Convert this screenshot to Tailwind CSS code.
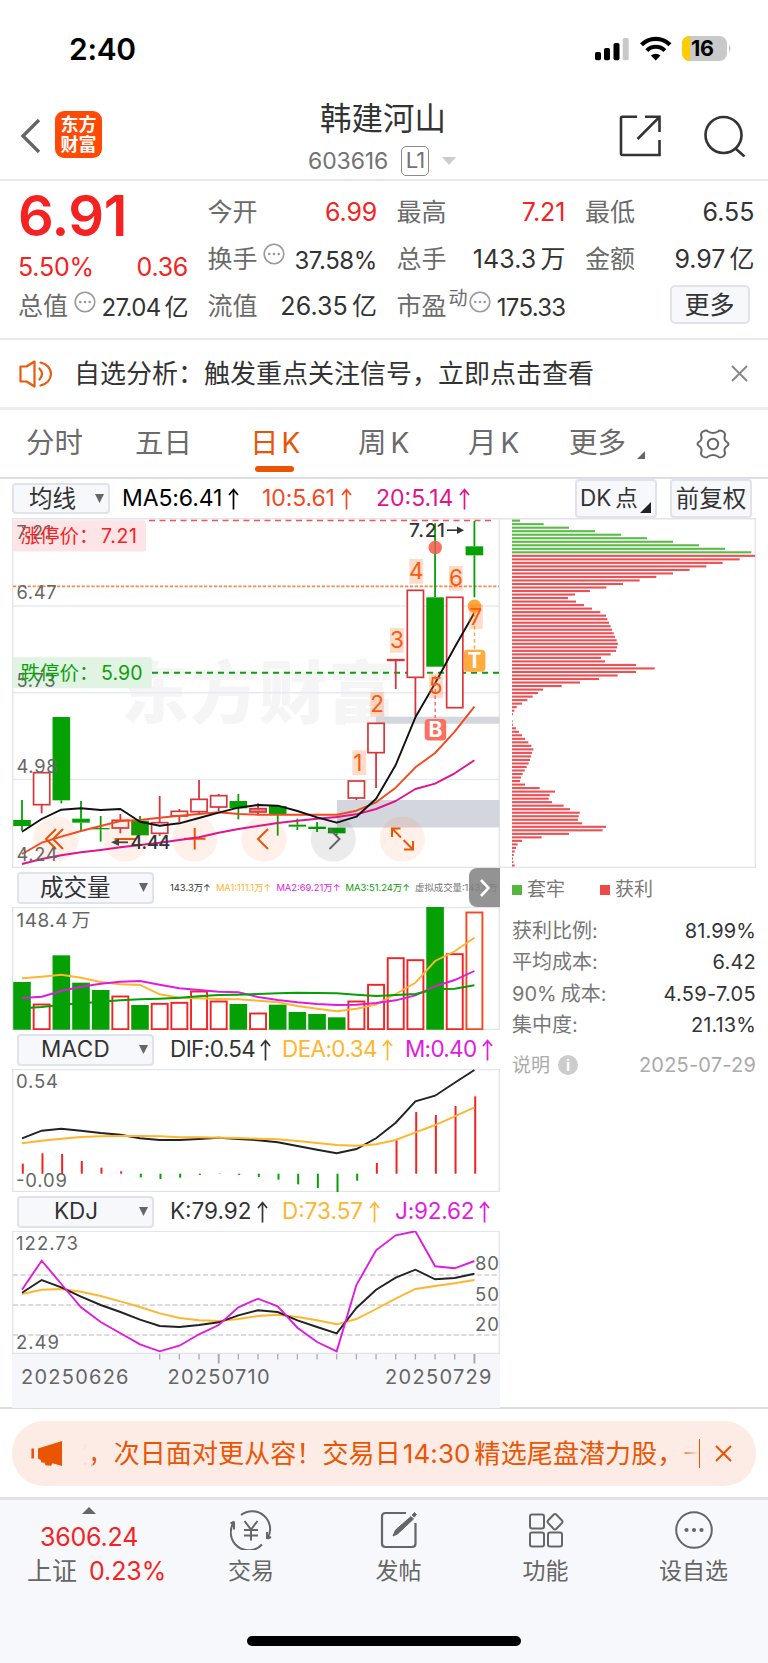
<!DOCTYPE html>
<html lang="zh-CN">
<head>
<meta charset="utf-8">
<title>韩建河山 603616</title>
<script src="https://cdn.jsdelivr.net/npm/@tailwindcss/browser@4"></script>
</head>
<body class="w-[768px] h-[1663px] flex flex-col bg-white font-['Inter','Noto_Sans_CJK_SC',sans-serif] text-[#333] overflow-hidden">

<!-- status bar -->
<div class="h-[98px] shrink-0 flex items-center justify-between pl-[69px] pr-[37px]">
  <div class="text-[30px] font-semibold text-black leading-none tracking-[-0.3px]">2:40</div>
  <svg class="w-[138px] h-[28px]" viewBox="593 35 138 28">
    <rect x="595" y="52" width="6" height="8.3" rx="1.8"/><rect x="604" y="48" width="6" height="12.3" rx="1.8"/><rect x="613.500" y="43" width="6" height="17.300" rx="1.800"/><rect x="622.700" y="38" width="6" height="22.300" rx="1.800" fill="#c9c9c9"/>
    <g fill="none" stroke="#000" stroke-width="4.200"><path d="M641.500 44.800a20 20 0 0 1 28.500 0"/><path d="M646.800 50.600a12.500 12.500 0 0 1 18 0"/></g>
    <path d="M655.700 60.500l-4.800-4.900a7 7 0 0 1 9.600 0z"/>
    <clipPath id="bat"><rect x="682" y="36" width="45" height="25" rx="7.500"/></clipPath>
    <g clip-path="url(#bat)"><rect x="682" y="36" width="45" height="25" fill="#c9c9c9"/><rect x="682" y="36" width="8" height="25" fill="#ffcc00"/></g>
    <path d="M729 44.500q3 4 0 8z" fill="#c9c9c9"/>
    <text x="691" y="56.300" font-size="21.500" font-weight="700" letter-spacing="-0.3">16</text>
  </svg>
</div>

<!-- header -->
<div class="h-[83px] shrink-0 border-b-2 border-[#e9e9e9] flex items-center justify-between pl-[20px] pr-[22px] relative">
  <div class="flex items-center gap-[14px] relative -top-[3px]">
    <svg class="w-[21px] h-[36px]" viewBox="0 0 21 36"><path d="M19 2L3 18l16 16" fill="none" stroke="#666" stroke-width="3.400"/></svg>
    <div class="w-[47px] h-[47px] rounded-[9px] bg-[#ff4a06] text-white font-bold text-[18px] leading-[20px] flex flex-col items-center justify-center relative -top-[1px]"><span>东方</span><span>财富</span></div>
  </div>
  <div class="absolute left-[308px] top-[2px] w-[150px]">
    <div class="text-[31.500px] leading-[38px] pl-[12px] text-[#333]">韩建河山</div>
    <div class="flex items-center mt-[8px] h-[30px]">
      <span class="text-[23px] leading-none text-[#737373] tracking-[-0.1px] w-[93px]">603616</span>
      <span class="w-[28px] h-[30px] border-[1.500px] border-[#8a8a8a] rounded-[5px] text-[22px] leading-[27px] text-center text-[#737373] tracking-[-1px]">L1</span>
      <svg class="w-[14px] h-[8px] ml-[13px]" viewBox="0 0 14 8"><path d="M0 0h14l-7 8z" fill="#ccc"/></svg>
    </div>
  </div>
  <div class="flex items-center gap-[42px] -mt-[5px]">
    <svg class="w-[43px] h-[42px]" viewBox="0 0 43 42"><g fill="none" stroke="#333" stroke-width="2.600"><path d="M18 1.800H3.500a1.500 1.500 0 0 0-1.500 1.500V38.500a1.500 1.500 0 0 0 1.500 1.500h37V25"/><path d="M26 1.800h14.500V17M40.500 1.800L18.500 24"/></g></svg>
    <svg class="w-[42px] h-[42px]" viewBox="0 0 42 42"><g fill="none" stroke="#333" stroke-width="2.600"><circle cx="19.500" cy="20" r="18"/><path d="M31.500 33.500L40.500 41.500"/></g></svg>
  </div>
</div>

<!-- quote figures -->
<div class="h-[159px] shrink-0 border-b-2 border-[#e9e9e9] grid grid-cols-[170px_169.500px_169px_169.500px] gap-x-[19.500px] pl-[18px] pt-[8px] text-[25px] leading-[47px] whitespace-nowrap">
  <div class="flex flex-col">
    <div class="text-[56px] h-[54px] leading-[54px] font-semibold text-[#f62222] tracking-[-0.5px]">6.91</div>
    <div class="flex justify-between text-[#f62222] h-[40px] leading-[48px]"><span class="tracking-[-0.2px]">5.50%</span><span class="tracking-[-0.3px]">0.36</span></div>
    <div class="flex justify-between h-[47px]"><span class="text-[#6b6b6b]">总值</span><svg class="w-[22px] h-[22px] mt-[8px] -mr-[1px]" viewBox="0 0 22 22"><use href="#tip"/></svg><span class="text-[24px] tracking-[-0.6px] leading-[49px]">27.04<span class="ml-[4px]">亿</span></span></div>
  </div>
  <div class="flex flex-col">
    <div class="flex justify-between h-[47px]"><span class="text-[#6b6b6b]">今开</span><span class="text-[#f62222] tracking-[-0.2px]">6.99</span></div>
    <div class="flex justify-between h-[47px]"><span class="text-[#6b6b6b]">换手</span><svg class="w-[22px] h-[22px] mt-[7px] -ml-[3px]" viewBox="0 0 22 22"><use href="#tip"/></svg><span class="text-[24px] tracking-[-0.4px] leading-[50px]">37.58%</span></div>
    <div class="flex justify-between h-[47px]"><span class="text-[#6b6b6b]">流值</span><span class="tracking-[0.1px]">26.35<span class="ml-[4px]">亿</span></span></div>
  </div>
  <div class="flex flex-col">
    <div class="flex justify-between h-[47px]"><span class="text-[#6b6b6b]">最高</span><span class="text-[#f62222]">7.21</span></div>
    <div class="flex justify-between h-[47px]"><span class="text-[#6b6b6b]">总手</span><span class="tracking-[0.1px]">143.3<span class="ml-[4px]">万</span></span></div>
    <div class="flex h-[47px] text-[#6b6b6b]"><span>市盈</span><span class="text-[19px] leading-[32px] ml-[2px]">动</span><svg class="w-[22px] h-[22px] mt-[8px] ml-[1px]" viewBox="0 0 22 22"><use href="#tip"/></svg><span class="text-[24px] tracking-[-0.7px] text-[#333] leading-[50px] flex-1 text-right">175.33</span></div>
  </div>
  <div class="flex flex-col">
    <div class="flex justify-between h-[47px]"><span class="text-[#6b6b6b]">最低</span><span>6.55</span></div>
    <div class="flex justify-between h-[47px]"><span class="text-[#6b6b6b]">金额</span><span>9.97<span class="ml-[4px]">亿</span></span></div>
    <div class="flex justify-end pr-[5px] pt-[2px]"><span class="w-[80px] h-[39px] border-2 border-[#e0e3ea] rounded-[5px] bg-[#f7f8fb] text-[25px] leading-[36px] text-center">更多</span></div>
  </div>
</div>

<!-- notice -->
<div class="h-[70px] shrink-0 border-b-[3px] border-[#ededed] flex items-center pl-[19px] pr-[20px]">
  <svg class="w-[34px] h-[28px]" viewBox="0 0 34 28"><g fill="none" stroke="#ea5a0c" stroke-width="2.200" stroke-linejoin="round" stroke-linecap="round"><path d="M15.500 1.500L7.500 6.500H1.500v15h6l8 5z"/><path d="M20.500 8.500q5 5.500 0 11M21.500 2.500q10 2.500 10.500 11.500q-.5 9-10.500 11.500"/></g></svg>
  <div class="text-[26px] leading-none ml-[21px] flex-1">自选分析：触发重点关注信号，立即点击查看</div>
  <svg class="w-[17px] h-[17px]" viewBox="0 0 17 17"><path d="M1 1l15 15M16 1L1 16" stroke="#888" stroke-width="2"/></svg>
</div>

<!-- period tabs -->
<div class="h-[69px] shrink-0 border-b-2 border-[#dcdfe6] flex items-center pl-[26px] text-[28.500px] leading-none text-[#6b6b6b] relative">
  <span class="w-[109px]">分时</span><span class="w-[115px]">五日</span>
  <span class="w-[108px] text-[#ea5504] relative">日<span class="ml-[3px] text-[28px]">K</span><span class="absolute left-[5px] top-[37px] w-[39px] h-[6px] rounded-[3px] bg-[#ea5504]"></span></span>
  <span class="w-[110px]">周<span class="ml-[4px] text-[28px]">K</span></span><span class="w-[101px]">月<span class="ml-[4px] text-[28px]">K</span></span>
  <span class="w-[68px]">更多</span>
  <svg class="w-[8px] h-[8px] mt-[22px]" viewBox="0 0 8 8"><path d="M8 0v8H0z" fill="#666"/></svg>
  <svg class="w-[34px] h-[32px] ml-[51px]" viewBox="-17 -16 34 32"><path d="M-5-12.500Q0-9.500 5-12.500Q6.500-14.500 10-12.500Q13-10.500 11.500-7Q11-3.500 14.500-1.500Q16.500 0 14.500 1.800Q11 3.500 11.500 7Q13 10.500 10 12.500Q6.500 14.500 5 12.500Q0 9.500-5 12.500Q-6.500 14.500-10 12.500Q-13 10.500-11.500 7Q-11 3.500-14.500 1.500Q-16.500 0-14.500-1.800Q-11-3.500-11.500-7Q-13-10.500-10-12.500Q-6.500-14.500-5-12.500Z" fill="none" stroke="#666" stroke-width="2"/><circle r="5.200" fill="none" stroke="#666" stroke-width="2"/></svg>
</div>

<!-- overlay toolbar -->
<div class="h-[39px] shrink-0 flex items-center pl-[12px] pr-[16px] text-[23.500px] leading-none">
  <div class="w-[98px] h-[31px] border-2 border-[#e0e3ea] rounded-[4px] bg-[#f7f8fb] flex items-center justify-between pl-[15px] pr-[4px]">均线<svg class="w-[9px] h-[9px]" viewBox="0 0 9 9"><path d="M0 0h9l-4.500 9z" fill="#666"/></svg></div>
  <div class="w-[140px] pl-[12px] text-[23px] text-black tracking-[-0.1px] whitespace-nowrap flex items-center">MA5:6.41<svg class="w-[11px] h-[22px] ml-[6px]" viewBox="0 0 11 22"><use href="#up"/></svg></div>
  <div class="w-[114px] pl-[12px] text-[23px] text-[#f4481e] tracking-[-0.1px] flex items-center">10:5.61<svg class="w-[11px] h-[22px] ml-[6px]" viewBox="0 0 11 22"><use href="#up"/></svg></div>
  <div class="pl-[12px] text-[23px] text-[#e0148c] tracking-[0px] flex items-center flex-1">20:5.14<svg class="w-[11px] h-[22px] ml-[6px]" viewBox="0 0 11 22"><use href="#up"/></svg></div>
  <div class="w-[82px] h-[39px] border-2 border-[#e0e3ea] rounded-[4px] bg-[#f7f8fb] flex items-center pl-[3px] relative whitespace-nowrap"><span class="text-[22.500px]">DK<span class="ml-[4px]">点</span></span><svg class="absolute right-[4px] bottom-[3px] w-[11px] h-[11px]" viewBox="0 0 11 11"><path d="M11 0v11H0z" fill="#222"/></svg></div>
  <div class="w-[82px] h-[39px] ml-[13px] border-2 border-[#e0e3ea] rounded-[4px] bg-[#f7f8fb] flex items-center justify-center whitespace-nowrap">前复权</div>
</div>

<!-- charts -->
<div class="flex h-[891px] shrink-0 pl-[12px] border-b-2 border-[#d9dbe4]">
  <div class="w-[488px] flex flex-col">
    <svg class="w-[488px] h-[350px] shrink-0 block" viewBox="12 518 488 350" font-family="Inter, 'Noto Sans CJK SC', sans-serif">
      <text x="121" y="718" font-size="68" font-weight="900" fill="#f5f5f6" textLength="275">东方财富</text>
      <g stroke="#e6eaf1" stroke-width="1.500"><path d="M12 606h488M12 692.700h488M12 779.500h488"/></g>
      <path d="M12.700 868V518.700H499.300V868" fill="none" stroke="#e1e4ea" stroke-width="1.400"/><path d="M12 867.500h488" stroke="#e1e4ea" stroke-width="1.400"/>
      <g fill="#d3d6dc"><rect x="337" y="800" width="162.500" height="27.500"/><rect x="376" y="716.700" width="123.500" height="7"/></g>
      <path d="M149 520.500H495" stroke="#f95252" stroke-width="1.500" stroke-dasharray="6 4.500"/>
      <path d="M13 586.400H499" stroke="#f58a4a" stroke-width="1.800" stroke-dasharray="3.200 1.700"/>
      <path d="M152 672.700H499" stroke="#0aa00a" stroke-width="1.900" stroke-dasharray="6 5"/>
      <g id="candles"></g>
      <g fill="#ff5a0a" fill-opacity=".09"><circle cx="56" cy="839" r="22.600"/><circle cx="125.300" cy="839" r="22.600"/><circle cx="194.700" cy="839" r="22.600"/><circle cx="264" cy="839" r="22.600"/><circle cx="402.300" cy="839" r="22.600"/></g>
      <circle cx="333.300" cy="839" r="22.600" fill="#000" fill-opacity=".08"/>
      <g fill="none" stroke="#ea5504" stroke-width="2"><path d="M56 829l-10 10 10 10M63 829l-10 10 10 10M114.500 839h21.500M184 838.700h21.500M194.700 828v21.500M268 829l-10 10 10 10"/><path d="M392 837V828.500h8.500M392 828.500l9 9M404 849.500h9V841M413 849.500l-9.500-9.500"/></g>
      <path d="M329.500 829l10 10-10 10" fill="none" stroke="#666" stroke-width="2"/>
      <g id="ma" fill="none" stroke-width="1.900" stroke-linejoin="round"></g>
      <rect x="12.700" y="520.300" width="133.300" height="31.200" rx="2" fill="#fde4e6"/>
      <rect x="12.700" y="657.300" width="139" height="31" rx="2" fill="#e1f3e2"/>
      <g font-size="18.300" fill="#666"><text x="16.500" y="539" textLength="35">7.21</text><text x="16.500" y="598.500" textLength="40">6.47</text><text x="16.500" y="686.500" textLength="39">5.73</text><text x="16.500" y="773.300" textLength="41">4.98</text><text x="16.500" y="860.500" textLength="41">4.24</text></g>
      <g font-size="19.500" fill="#f62222"><text x="20.500" y="543.300">涨停价：</text><text x="101" y="543.300" textLength="36">7.21</text></g>
      <g font-size="19.500" fill="#0aa00a"><text x="20.500" y="680.300">跌停价：</text><text x="101" y="680.300" textLength="41.500">5.90</text></g>
      <text x="130.500" y="849.300" font-size="18.500" fill="#333" font-weight="500" textLength="40">4.44</text>
      <path d="M128 842.300H115" stroke="#444" stroke-width="1.800"/><path d="M111 842.300l8-3.800v7.600z" fill="#444"/>
      <text x="409" y="537.300" font-size="19" fill="#333" font-weight="500" textLength="36">7.21</text>
      <path d="M447 530.200h13" stroke="#333" stroke-width="1.600"/><path d="M464 530.200l-7-3.800v7.600z" fill="#333"/>
      <circle cx="435.200" cy="547.500" r="6.800" fill="#fe6f61"/><path d="M435.200 540v15" stroke="#8c7a35" stroke-width="1.300"/>
      <circle cx="474.500" cy="606.200" r="6.800" fill="#ffa63a"/>
      <path d="M435.200 676v42" stroke="#fe6f61" stroke-width="1.500" stroke-dasharray="3.500 3"/><path d="M474.500 613v36" stroke="#ffa63a" stroke-width="1.500" stroke-dasharray="3.500 3"/>
      <g id="marks" font-size="22.500"></g>
      <rect x="424.700" y="719" width="21.500" height="21.500" rx="4" fill="#fe6f61"/><rect x="463.700" y="649.700" width="21.700" height="22" rx="4" fill="#ffab40"/>
      <g fill="#fff" font-weight="700" font-size="21" text-anchor="middle"><text x="435.500" y="737.400">B</text><text x="474.500" y="668.400">T</text></g>
    </svg>

    <div class="h-[39px] shrink-0 flex items-center pl-[5px] relative">
      <div class="w-[137px] h-[32px] border-2 border-[#e0e3ea] rounded-[4px] bg-[#f7f8fb] flex items-center pr-[4px] text-[23.500px]"><span class="flex-1 pl-[21px]">成交量</span><svg class="w-[9px] h-[9px]" viewBox="0 0 9 9"><path d="M0 0h9l-4.500 9z" fill="#666"/></svg></div>
      <div class="flex gap-[5px] ml-[16px] text-[9.400px] leading-none whitespace-nowrap w-[330px] overflow-hidden"><span>143.3万↑</span><span class="text-[#ffb52e]">MA1:111.1万↑</span><span class="text-[#e01be0]">MA2:69.21万↑</span><span class="text-[#0aa00a]">MA3:51.24万↑</span><span class="text-[#777]">虚拟成交量:143.5万</span></div>
      <div class="absolute right-0 top-0 w-[31px] h-[39px] rounded-l-[8px] bg-[#808080]/85 flex items-center justify-center"><svg class="w-[10px] h-[18px]" viewBox="0 0 10 18"><path d="M1 1l7.500 8L1 17" fill="none" stroke="#fff" stroke-width="2.600"/></svg></div>
    </div>
    <svg id="vol" class="w-[488px] h-[123px] shrink-0 block" viewBox="12 907 488 123" font-family="Inter, 'Noto Sans CJK SC', sans-serif">
      <rect x="12.700" y="907.500" width="486.600" height="122" fill="none" stroke="#e1e4ea" stroke-width="1.400"/>
      <g id="volbars"></g><g id="volma" fill="none" stroke-width="1.900"></g>
      <text x="16.500" y="926.600" font-size="19" fill="#666" textLength="51">148.4</text><text x="71.500" y="926.600" font-size="19" fill="#666">万</text>
    </svg>

    <div class="h-[39px] shrink-0 flex items-center pl-[5px] text-[22.500px] leading-none">
      <div class="w-[137px] h-[32px] border-2 border-[#e0e3ea] rounded-[4px] bg-[#f7f8fb] flex items-center pr-[4px]"><span class="flex-1 pl-[22px] tracking-[0.3px]">MACD</span><svg class="w-[9px] h-[9px]" viewBox="0 0 9 9"><path d="M0 0h9l-4.500 9z" fill="#666"/></svg></div>
      <div class="w-[112px] ml-[16px] flex items-center tracking-[-0.6px]">DIF:0.54<svg class="w-[11px] h-[22px] ml-[5px]" viewBox="0 0 11 22"><use href="#up"/></svg></div>
      <div class="w-[123px] flex items-center text-[#ffb52e] tracking-[-0.6px]">DEA:0.34<svg class="w-[11px] h-[22px] ml-[5px]" viewBox="0 0 11 22"><use href="#up"/></svg></div>
      <div class="flex items-center text-[#e01be0] tracking-[-0.7px]">M:0.40<svg class="w-[11px] h-[22px] ml-[6px]" viewBox="0 0 11 22"><use href="#up"/></svg></div>
    </div>
    <svg class="w-[488px] h-[123px] shrink-0 block" viewBox="12 1069 488 123" font-family="Inter, sans-serif">
      <rect x="12.700" y="1069.500" width="486.600" height="122" fill="none" stroke="#e1e4ea" stroke-width="1.400"/>
      <g id="macdbars" stroke-width="2"></g><g id="macd" fill="none" stroke-width="1.900"></g>
      <g font-size="18.500" fill="#666"><text x="16" y="1088" textLength="42">0.54</text><text x="16" y="1187" textLength="51">-0.09</text></g>
    </svg>

    <div class="h-[39px] shrink-0 flex items-center pl-[5px] text-[22.500px] leading-none">
      <div class="w-[137px] h-[32px] border-2 border-[#e0e3ea] rounded-[4px] bg-[#f7f8fb] flex items-center pr-[4px]"><span class="flex-1 pl-[35px]">KDJ</span><svg class="w-[9px] h-[9px]" viewBox="0 0 9 9"><path d="M0 0h9l-4.500 9z" fill="#666"/></svg></div>
      <div class="w-[112px] ml-[16px] flex items-center">K:79.92<svg class="w-[11px] h-[22px] ml-[5px]" viewBox="0 0 11 22"><use href="#up"/></svg></div>
      <div class="w-[113px] flex items-center text-[#ffb52e]">D:73.57<svg class="w-[11px] h-[22px] ml-[6px]" viewBox="0 0 11 22"><use href="#up"/></svg></div>
      <div class="flex items-center text-[#e01be0] tracking-[-0.2px]">J:92.62<svg class="w-[11px] h-[22px] ml-[5px]" viewBox="0 0 11 22"><use href="#up"/></svg></div>
    </div>
    <svg class="w-[488px] h-[177px] shrink-0 block" viewBox="12 1231 488 177" font-family="Inter, sans-serif">
      <rect x="12" y="1354" width="488" height="54" fill="#f6f7fa"/>
      <rect x="12.700" y="1231.200" width="486.600" height="122.200" fill="none" stroke="#e1e4ea" stroke-width="1.400"/>
      <path d="M13 1275H499M13 1305H499M13 1335H499" stroke="#cfcfcf" stroke-width="1.600" stroke-dasharray="5 2.600"/>
      <g font-size="18.500" fill="#666"><text x="16" y="1249.800" textLength="62">122.73</text><text x="16" y="1348.500" textLength="43">2.49</text><text x="475" y="1270.300" textLength="24">80</text><text x="475" y="1300.500" textLength="24">50</text><text x="475" y="1330.700" textLength="24">20</text></g>
      <g id="kdj" fill="none" stroke-width="1.900"></g><g id="ticks" stroke="#aaa" stroke-width="1.300"></g>
      <g font-size="20" fill="#666"><text x="21" y="1384.300" textLength="107.500">20250626</text><text x="167.500" y="1384.300" textLength="102">20250710</text><text x="385" y="1384.300" textLength="106.500">20250729</text></g>
    </svg>
  </div>

  <div class="flex flex-col w-[256px]">
    <svg class="w-[256px] h-[350px] shrink-0 block" viewBox="500 518 256 350"><path d="M500 518.700H755.300V867.400H500" fill="none" stroke="#e1e4ea" stroke-width="1.400"/><g id="chips"></g></svg>
    <div class="pl-[12px] text-[20px] leading-none text-[#777]">
      <div class="flex items-center h-[43px] text-[19px]"><span class="w-[10px] h-[10px] bg-[#55b73f]"></span><span class="ml-[5px] w-[73px]">套牢</span><span class="w-[10px] h-[10px] bg-[#ee4a4a]"></span><span class="ml-[5px]">获利</span></div>
      <div class="h-[4px]"></div>
      <div class="flex items-center justify-between h-[31px]"><span>获利比例:</span><span class="text-[#333] tracking-[0.1px]">81.99%</span></div>
      <div class="flex items-center justify-between h-[32px]"><span>平均成本:</span><span class="text-[#333] tracking-[0.200px]">6.42</span></div>
      <div class="flex items-center justify-between h-[31px]"><span>90%<span class="ml-[4px]">成本:</span></span><span class="text-[#333] tracking-[0.300px]">4.59-7.05</span></div>
      <div class="flex items-center justify-between h-[32px]"><span>集中度:</span><span class="text-[#333] tracking-[0.1px]">21.13%</span></div>
      <div class="flex items-center h-[48px] text-[#aaa]"><span class="text-[19px]">说明</span><span class="w-[20px] h-[20px] rounded-full bg-[#ccc] ml-[8px] text-white text-[15px] font-bold flex items-center justify-center">i</span><span class="flex-1 text-right tracking-[0.200px]">2025-07-29</span></div>
    </div>
  </div>
</div>

<!-- ticker banner -->
<div class="h-[91px] shrink-0 pt-[12px] px-[12px] border-b-[3px] border-[#e1e2e5]">
  <div class="h-[65px] rounded-[32px] bg-[#fdece5] flex items-center pl-[19px] pr-[24px] text-[#ea5504]">
    <svg class="w-[32px] h-[27px] shrink-0" viewBox="0 0 32 27"><path d="M1.700 8.500v10" stroke="#ea5504" stroke-width="2.600"/><path d="M7 8.500L31 1v25l-9.500-2.800-1.500 2.500-5.500-.5-1-2.500-3-.3-.8-2.500L7 18.500z" fill="#ea5504"/></svg>
    <div class="relative ml-[16px] w-[619px] h-[40px] overflow-hidden">
      <div class="absolute right-[-12px] top-0 text-[26px] leading-[40px] tracking-[0.1px] whitespace-nowrap">定，次日面对更从容！交易日<span class="ml-[2px] mr-[4px]">14:30</span>精选尾盘潜力股，一</div>
      <div class="absolute left-0 top-0 w-[14px] h-[40px] bg-linear-to-r from-[#fdece5] from-30% to-[#fdece5]/50"></div>
      <div class="absolute right-0 top-0 w-[20px] h-[40px] bg-linear-to-l from-[#fdece5] to-[#fdece5]/0"></div>
    </div>
    <div class="w-[1.500px] h-[29px] bg-[#ea5504] ml-[1px]"></div>
    <svg class="w-[17px] h-[17px] ml-[15px]" viewBox="0 0 17 17"><path d="M1 1l15 15M16 1L1 16" stroke="#ea5504" stroke-width="2"/></svg>
  </div>
</div>

<!-- bottom navigation -->
<div class="flex-1 bg-[#f7f8fb] flex flex-col items-center text-[23px] leading-none text-[#666]">
  <div class="w-full h-[136px] flex pl-[16px]">
    <div class="w-[161px] flex flex-col pl-[11px] pt-[7px]">
      <svg class="w-[14px] h-[7px] ml-[55px]" viewBox="0 0 14 7"><path d="M0 7h14L7 0z" fill="#666"/></svg>
      <div class="text-[#f62222] text-[25px] mt-[11px] ml-[13px] tracking-[-0.200px]">3606.24</div>
      <div class="mt-[9px] text-[25px] whitespace-nowrap">上证<span class="ml-[12px] text-[#f62222] tracking-[-0.100px]">0.23%</span></div>
    </div>
    <div class="w-[148px] flex flex-col items-center pt-[10px] gap-[10px]">
      <svg class="w-[42px] h-[40px]" viewBox="-21 -20 42 40"><g fill="none" stroke="#666" stroke-width="2"><path d="M-10-15A18 18 0 0 1 16.500 8.500M16.500 8.500l3.500-1.500M16 9l0-7"/><path d="M11 14.500A18 18 0 0 1-17-8M-17-8.500l-3.500 2M-17-8.500v8"/><path d="M-6.500-9l6.500 8.500L6.500-9M0-.5V10.500M-7 0H7M-7 5.500H7"/></g></svg><span>交易</span>
    </div>
    <div class="w-[147px] flex flex-col items-center pt-[10px] gap-[10px]">
      <svg class="w-[38px] h-[40px]" viewBox="0 0 38 40"><path d="M26 3H5.500Q2 3 2 6.500V33.500Q2 37 5.500 37H32Q35.500 37 35.500 33.500V13" fill="none" stroke="#666" stroke-width="2.200"/><path d="M13 26l2.500-6L31 6.500l2.500 2.500L17.500 24zM32 5l2.500-2.500 1.800 1.800L34.500 7z" fill="#666" stroke="#666"/></svg><span>发帖</span>
    </div>
    <div class="w-[147px] flex flex-col items-center pt-[10px] gap-[10px]">
      <svg class="w-[36px] h-[40px]" viewBox="0 0 36 40"><g fill="none" stroke="#666" stroke-width="2"><rect x="2" y="4.500" width="14" height="14" rx="2"/><rect x="2" y="22.500" width="14" height="14" rx="2"/><rect x="20" y="22.500" width="14" height="14" rx="2"/><path d="M25.800 4.500q1.200-1 2.400 0L34 10.500q1 1.200 0 2.400L28.200 19q-1.200 1-2.400 0L20 12.900q-1-1.200 0-2.400z"/></g></svg><span>功能</span>
    </div>
    <div class="w-[149px] flex flex-col items-center pt-[10px] gap-[10px]">
      <svg class="w-[40px] h-[40px]" viewBox="-20 -20 40 40"><circle r="17.800" fill="none" stroke="#666" stroke-width="2"/><g fill="#666"><circle cx="-7.500" r="2.100"/><circle r="2.100"/><circle cx="7.500" r="2.100"/></g></svg><span>设自选</span>
    </div>
  </div>
  <div class="w-[274px] h-[10px] rounded-[5px] bg-black"></div>
</div>

<svg class="hidden">
  <defs>
    <g id="tip"><circle cx="11" cy="11" r="9.800" fill="none" stroke="#999" stroke-width="1.600"/><g fill="#999"><circle cx="6.300" cy="11" r="1.300"/><circle cx="11" cy="11" r="1.300"/><circle cx="15.700" cy="11" r="1.300"/></g></g>
    <path id="up" d="M5.500 21.500V1.500M1 7L5.500 1.500L10 7" fill="none" stroke="currentColor" stroke-width="1.700"/>
  </defs>
</svg>

<script>
const NS = 'http://www.w3.org/2000/svg', G = '#04a004', R = '#d9363b';
const cx = i => 22 + 19.67 * i;
function add(id, tag, attrs, text) {
  const e = document.createElementNS(NS, tag);
  for (const k in attrs) e.setAttribute(k, attrs[k]);
  if (text) e.textContent = text;
  document.getElementById(id).appendChild(e);
}
// series values are thirds of a pixel below the given base line
const line = (id, base, color, ys) => add(id, 'polyline', {stroke: color, points: ys.map((y, i) => cx(i).toFixed(1) + ',' + (base + y / 3).toFixed(1)).join(' ')});

// [up, bodyTop, bodyBottom, wickTop, wickBottom]
[[0,930,948,870,962],[1,788,884,788,910],[0,621,871,621,880],[0,926,938,873,963],[0,954,958,918,995],[1,931,954,912,970],[0,932,976,918,976],[1,938,970,858,978],[1,904,918,897,936],[1,868,905,810,911],[1,857,891,852,903],[0,873,895,852,928],[1,896,906,880,916],[0,888,912,888,977],[0,944,950,926,960],[0,950,957,936,966],[0,953,970,953,975],[1,813,864,813,870],[1,640,728,640,834],[1,449,451,449,537],[1,241,502,241,620],[0,262,470,40,470],[1,262,593,262,593],[0,109,136,33,262]
].forEach(([up, t, b, wt, wb], i) => {
  const y = v => 510 + v / 3, c = up ? R : G;
  if (wt < t) add('candles', 'path', {d: `M${cx(i)} ${y(wt)}V${y(t)}`, stroke: c, 'stroke-width': 1.8});
  if (wb > b) add('candles', 'path', {d: `M${cx(i)} ${y(b)}V${y(wb)}`, stroke: c, 'stroke-width': 1.8});
  if (up) add('candles', 'rect', {x: cx(i) - 8.1, y: y(t), width: 16.2, height: y(b) - y(t), fill: i === 12 ? '#e58a8d' : '#fff', stroke: c, 'stroke-width': 1.7});
  else add('candles', 'rect', {x: cx(i) - 8.8, y: y(t), width: 17.6, height: y(b) - y(t), fill: c});
});
line('ma', 510, '#e0148c', [1062,1047,1036,1027,1020,1012,1005,998,990,982,968,957,948,939,932,926,921,913,897,873,837,821,790,751]);
line('ma', 510, '#f4481e', [1032,998,980,963,948,933,930,923,917,912,907,912,914,914,914,914,914,902,877,833,772,729,665,590]);
line('ma', 510, '#111', [965,927,899,895,900,897,935,947,940,924,908,893,885,887,903,922,938,920,866,765,622,520,412,308]);
[[307,721],[361,546],[420,354],[478,147],[537,490],[597,168],[657,283]].forEach(([x, y], i) => {
  add('marks', 'rect', {x: 250 + x / 3, y: 510 + y / 3, width: 13.8, height: 24.7, fill: '#ff7a3c', 'fill-opacity': .27});
  add('marks', 'text', {x: (i ? 256.9 : 255.5) + x / 3, y: 530.2 + y / 3, 'text-anchor': 'middle', fill: '#fb5a0a'}, String(i + 1));
});

[[0,366],[1,432],[0,286],[0,368],[0,390],[1,408],[0,435],[1,430],[1,427],[1,393],[1,423],[0,432],[1,459],[0,434],[0,456],[0,462],[0,472],[1,423],[1,373],[1,293],[1,299],[0,141],[1,281],[1,156]
].forEach(([up, t], i) => {
  const y = 860 + t / 3;
  if (up) add('volbars', 'rect', {x: cx(i) - 8, y: y + .5, width: 16, height: 1028.7 - y, fill: '#fff', stroke: i === 23 ? '#f5491c' : '#f42222', 'stroke-width': 1.9});
  else add('volbars', 'rect', {x: cx(i) - 8.8, y, width: 17.6, height: 1029.7 - y, fill: G});
});
line('volma', 860, '#ffb52e', [355,350,344,353,366,373,375,403,413,415,417,418,422,427,438,446,454,446,434,402,368,303,274,233]);
line('volma', 860, '#e01be0', [414,410,393,380,371,365,363,374,385,390,395,397,411,420,427,432,435,434,429,421,406,379,360,333]);
line('volma', 860, G, [445,441,434,430,425,421,418,416,413,409,405,404,402,400,398,399,400,404,408,405,402,388,386,376]);

[911,880,882,903,923,934,952,957,953,945,940,945,951,959,973,984,1010,962,909,840,756,765,738,709].forEach((v, i) =>
  add('macdbars', 'path', {d: `M${cx(i) + .8} 1173.7V${860 + v / 3}`, stroke: v < 941 ? '#f42222' : G}));
line('macd', 860, '#222', [835,812,806,812,819,824,835,840,840,837,833,837,841,847,858,869,880,867,835,788,724,707,668,630]);
line('macd', 860, '#ffb52e', [850,842,836,831,829,828,828,829,832,832,833,834,836,838,843,849,855,857,853,840,817,795,769,742]);

line('kdj', 1180, '#ffb52e', [342,329,327,335,348,364,381,400,414,421,423,417,408,404,411,421,433,417,387,356,327,318,310,300]);
line('kdj', 1180, '#222', [338,300,322,350,375,396,419,438,441,435,427,406,391,396,421,441,460,384,329,293,269,298,294,281]);
line('kdj', 1180, '#e01be0', [329,242,312,382,426,460,493,514,497,463,435,382,356,379,443,486,514,315,211,166,154,259,265,243]);
for (let i = 7; i < 24; i++) add('ticks', 'path', {d: `M${cx(i)} 1354v${i === 10 || i === 23 ? 9.5 : 5.5}`, 'stroke-width': i === 10 || i === 23 ? 2 : 1.3});

[60,131,207,285,363,441,519,597,675,754,765,719,668,619,569,519,469,419,369,319,270,225,204,228,252,276,301,318,322,327,332,336,341,345,350,354,351,348,332,303,315,408,464,408,353,297,240,185,129,114,98,82,66,50,43,39,36,38,39,48,57,66,75,85,94,100,96,93,90,86,80,74,68,63,60,75,119,165,149,146,156,191,210,239,236,234,246,318,308,207,125,66,53,48,44,41,39,40,44
].forEach((x, i) => add('chips', 'rect', {x: 512, y: 519.6 + i * 3.519, width: (x - 36) / 3, height: 2.1, fill: i < 10 ? '#5cba48' : '#ec5054'}));
</script>
</body>
</html>
